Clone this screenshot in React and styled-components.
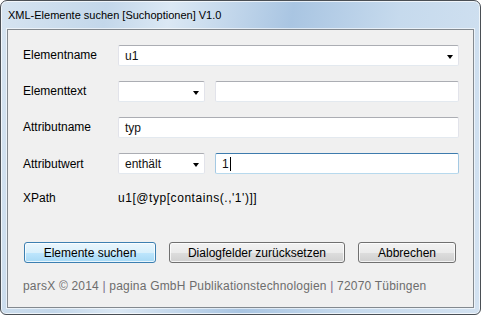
import React from 'react';
import styled, { createGlobalStyle } from 'styled-components';

const GlobalStyle = createGlobalStyle`
  html, body {
    margin: 0;
    padding: 0;
    background: #ffffff;
  }
  * {
    box-sizing: border-box;
  }
`;

const Window = styled.div`
  width: 481px;
  height: 315px;
  border: 1px solid #4a4f55;
  border-radius: 7px 7px 6px 6px;
  background: linear-gradient(100deg, #d6e4f1 0%, #c3d7ea 20%, #dbe8f4 32%, #a9c5e2 55%, #c6daed 75%, #d3e2f1 100%);
  box-shadow: inset 0 0 0 1px rgba(255, 255, 255, 0.7);
  display: flex;
  flex-direction: column;
  padding: 0 6px 6px 6px;
  font-family: "Liberation Sans", Arial, sans-serif;
`;

const TitleBar = styled.div`
  height: 28px;
  display: flex;
  align-items: center;
  padding-left: 1px;
  padding-bottom: 1px;
  font-size: 11px;
  color: #000;
`;

const Client = styled.div`
  flex: 1;
  background: #f0f0f0;
  border: 1px solid #83898f;
  box-shadow: 0 0 0 1px rgba(255, 255, 255, 0.6);
  padding: 15px 14px 0 15px;
  display: flex;
  flex-direction: column;
  font-size: 12px;
  color: #000;
`;

const Form = styled.div`
  display: grid;
  grid-template-columns: 95px 1fr;
  row-gap: 14px;
`;

const Label = styled.div`
  height: 22px;
  display: flex;
  align-items: center;
  padding-bottom: ${(p) => (p.$lift ? 2 : 0)}px;
`;

const FieldRow = styled.div`
  display: flex;
  gap: 10px;
  height: 22px;
`;

const Box = styled.div`
  position: relative;
  height: 21px;
  width: ${(p) => (p.$w ? `${p.$w}px` : 'auto')};
  flex: ${(p) => (p.$w ? 'none' : 1)};
  background: #fff;
  border: 1px solid;
  border-color: ${(p) => (p.$focus
    ? '#3d7bad #a4c9e3 #b7d9ed #a4c9e3'
    : '#abadb3 #e2e3ea #e3e9ef #e2e3ea')};
  border-radius: 2px;
  display: flex;
  align-items: center;
  padding-left: 6px;
  padding-top: 1px;
  font-size: 12px;
  color: #111;
`;

const Arrow = styled.div`
  position: absolute;
  right: 5px;
  top: 9px;
  width: 0;
  height: 0;
  border-left: 3.5px solid transparent;
  border-right: 3.5px solid transparent;
  border-top: 4px solid #000;
`;

const Caret = styled.span`
  display: inline-block;
  width: 1px;
  height: 14px;
  background: #000;
  margin-left: 1px;
`;

const XPathRow = styled.div`
  display: grid;
  grid-template-columns: 95px 1fr;
  height: 22px;
  align-items: center;
  margin-top: 12px;
`;

const XPathValue = styled.span`
  letter-spacing: 0.55px;
`;

const ButtonRow = styled.div`
  display: flex;
  gap: 13px;
  padding-left: 1px;
  margin-top: 33px;
`;

const Button = styled.div`
  width: ${(p) => p.$w}px;
  height: 21px;
  border: 1px solid ${(p) => (p.$primary ? '#3c7fb1' : '#707070')};
  border-radius: 3px;
  background: ${(p) => (p.$primary
    ? 'linear-gradient(#eaf6fd 0%, #d9f0fc 50%, #bee6fd 51%, #a7d9f5 100%)'
    : 'linear-gradient(#f2f2f2 0%, #ebebeb 50%, #dddddd 51%, #cfcfcf 100%)')};
  box-shadow: inset 0 0 0 1px rgba(255, 255, 255, 0.75);
  display: flex;
  align-items: center;
  justify-content: center;
  font-size: 12px;
  color: #000;
`;

const Footer = styled.div`
  margin-top: 16px;
  height: 14px;
  display: flex;
  align-items: center;
  color: #6d6d6d;
  font-size: 12px;
  letter-spacing: 0.2px;
  white-space: nowrap;
`;

const Sep = styled.span`
  color: #7a6a8a;
`;

export default function App() {
  return (
    <>
      <GlobalStyle />
      <Window>
        <TitleBar>XML-Elemente suchen [Suchoptionen] V1.0</TitleBar>
        <Client>
          <Form>
            <Label $lift>Elementname</Label>
            <FieldRow>
              <Box>
                u1
                <Arrow />
              </Box>
            </FieldRow>

            <Label $lift>Elementtext</Label>
            <FieldRow>
              <Box $w={87}>
                <Arrow />
              </Box>
              <Box />
            </FieldRow>

            <Label $lift>Attributname</Label>
            <FieldRow>
              <Box>typ</Box>
            </FieldRow>

            <Label>Attributwert</Label>
            <FieldRow>
              <Box $w={87}>
                enthält
                <Arrow />
              </Box>
              <Box $focus>
                1
                <Caret />
              </Box>
            </FieldRow>
          </Form>

          <XPathRow>
            <span>XPath</span>
            <XPathValue>u1[@typ[contains(.,'1')]]</XPathValue>
          </XPathRow>

          <ButtonRow>
            <Button $w={132} $primary>Elemente suchen</Button>
            <Button $w={176}>Dialogfelder zurücksetzen</Button>
            <Button $w={98}>Abbrechen</Button>
          </ButtonRow>

          <Footer>
            parsX © 2014&nbsp;<Sep>|</Sep>&nbsp;pagina GmbH Publikationstechnologien&nbsp;<Sep>|</Sep>&nbsp;72070 Tübingen
          </Footer>
        </Client>
      </Window>
    </>
  );
}
